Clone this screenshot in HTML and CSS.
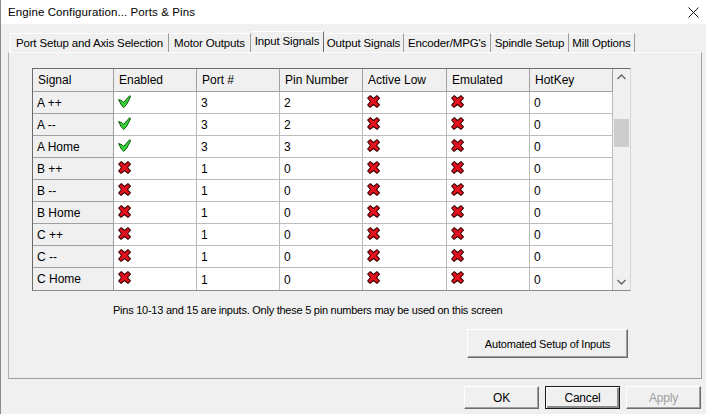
FILE: index.html
```html
<!DOCTYPE html>
<html>
<head>
<meta charset="utf-8">
<link rel="stylesheet" href="styles.css">
</head>
<body>
<svg class="defs" width="0" height="0">
  <symbol id="ok" viewBox="0 0 12 12">
    <path d="M0.5 4.2 L3.6 5.2 L5.2 6.8 L10.8 0.6 L11.6 1.6 L8 8.6 L5.4 11.5 L3.2 9.4 Z" fill="#33d633" stroke="#0b4f0b" stroke-width="0.9" stroke-linejoin="round"/>
  </symbol>
  <symbol id="no" viewBox="0 0 12 12">
    <path d="M0.6 2.8 L3 0.6 L6 3.2 L9.2 0.6 L11.5 2.8 L8.8 6 L11.5 9.2 L9.2 11.4 L6 8.8 L2.8 11.4 L0.6 9.2 L3.2 6 Z" fill="#e0101c" stroke="#3a0000" stroke-width="1" stroke-linejoin="round"/>
  </symbol>
</svg>

<div class="titlebar">
  <span class="title">Engine Configuration... Ports &amp; Pins</span>
  <svg class="close" width="11" height="11" viewBox="0 0 11 11"><path d="M0.5 0.5 L10.5 10.5 M10.5 0.5 L0.5 10.5" stroke="#111" stroke-width="1"/></svg>
</div>

<div class="tabs">
  <div class="tab t1">Port Setup and Axis Selection</div>
  <div class="tab t2">Motor Outputs</div>
  <div class="tab t3 active">Input Signals</div>
  <div class="tab t4">Output Signals</div>
  <div class="tab t5">Encoder/MPG's</div>
  <div class="tab t6">Spindle Setup</div>
  <div class="tab t7">Mill Options</div>
</div>

<div class="panel">
  <div class="gridwrap">
    <div class="grid">
      <div class="hd">Signal</div><div class="hd">Enabled</div><div class="hd">Port #</div><div class="hd">Pin Number</div><div class="hd">Active Low</div><div class="hd">Emulated</div><div class="hd">HotKey</div>

      <div class="rh">A ++</div><div class="c"><svg class="ic"><use href="#ok"/></svg></div><div class="c">3</div><div class="c">2</div><div class="c"><svg class="ic"><use href="#no"/></svg></div><div class="c"><svg class="ic"><use href="#no"/></svg></div><div class="c">0</div>

      <div class="rh">A --</div><div class="c"><svg class="ic"><use href="#ok"/></svg></div><div class="c">3</div><div class="c">2</div><div class="c"><svg class="ic"><use href="#no"/></svg></div><div class="c"><svg class="ic"><use href="#no"/></svg></div><div class="c">0</div>

      <div class="rh">A Home</div><div class="c"><svg class="ic"><use href="#ok"/></svg></div><div class="c">3</div><div class="c">3</div><div class="c"><svg class="ic"><use href="#no"/></svg></div><div class="c"><svg class="ic"><use href="#no"/></svg></div><div class="c">0</div>

      <div class="rh">B ++</div><div class="c"><svg class="ic"><use href="#no"/></svg></div><div class="c">1</div><div class="c">0</div><div class="c"><svg class="ic"><use href="#no"/></svg></div><div class="c"><svg class="ic"><use href="#no"/></svg></div><div class="c">0</div>

      <div class="rh">B --</div><div class="c"><svg class="ic"><use href="#no"/></svg></div><div class="c">1</div><div class="c">0</div><div class="c"><svg class="ic"><use href="#no"/></svg></div><div class="c"><svg class="ic"><use href="#no"/></svg></div><div class="c">0</div>

      <div class="rh">B Home</div><div class="c"><svg class="ic"><use href="#no"/></svg></div><div class="c">1</div><div class="c">0</div><div class="c"><svg class="ic"><use href="#no"/></svg></div><div class="c"><svg class="ic"><use href="#no"/></svg></div><div class="c">0</div>

      <div class="rh">C ++</div><div class="c"><svg class="ic"><use href="#no"/></svg></div><div class="c">1</div><div class="c">0</div><div class="c"><svg class="ic"><use href="#no"/></svg></div><div class="c"><svg class="ic"><use href="#no"/></svg></div><div class="c">0</div>

      <div class="rh">C --</div><div class="c"><svg class="ic"><use href="#no"/></svg></div><div class="c">1</div><div class="c">0</div><div class="c"><svg class="ic"><use href="#no"/></svg></div><div class="c"><svg class="ic"><use href="#no"/></svg></div><div class="c">0</div>

      <div class="rh last">C Home</div><div class="c last"><svg class="ic"><use href="#no"/></svg></div><div class="c last">1</div><div class="c last">0</div><div class="c last"><svg class="ic"><use href="#no"/></svg></div><div class="c last"><svg class="ic"><use href="#no"/></svg></div><div class="c last">0</div>
    </div>
    <div class="scrollbar">
      <svg class="arrow" width="17" height="17" viewBox="0 0 17 17"><path d="M4.5 10 L8.5 6 L12.5 10" fill="none" stroke="#606060" stroke-width="1.3"/></svg>
      <div class="track"><div class="thumb"></div></div>
      <svg class="arrow" width="17" height="17" viewBox="0 0 17 17"><path d="M4.5 7 L8.5 11 L12.5 7" fill="none" stroke="#606060" stroke-width="1.3"/></svg>
    </div>
  </div>

  <p class="caption">Pins 10-13 and 15 are inputs. Only these 5 pin numbers may be used on this screen</p>

  <div class="autorow">
    <button class="btn auto">Automated Setup of Inputs</button>
  </div>
</div>

<div class="footer">
  <button class="btn dlg">OK</button>
  <button class="btn dlg default">Cancel</button>
  <button class="btn dlg disabled">Apply</button>
</div>
</body>
</html>
```

FILE: styles.css
```css
* { box-sizing: border-box; }

html, body {
  margin: 0;
  padding: 0;
}

body {
  width: 706px;
  height: 414px;
  overflow: hidden;
  background: #f0f0f0;
  border-left: 1px solid #8a8a8a;
  font-family: "Liberation Sans", Arial, sans-serif;
  color: #000;
}

.defs { position: absolute; }

.titlebar {
  height: 24px;
  background: #fff;
  display: flex;
  align-items: center;
  justify-content: space-between;
  padding: 0 7px 0 7px;
}

.title {
  font-size: 11.5px;
  letter-spacing: 0.1px;
}

.tabs {
  display: flex;
  margin: 9px 0 0 9px;
  height: 19px;
}

.tab {
  height: 19px;
  font-size: 11.5px;
  line-height: 18px;
  text-align: center;
  border-top: 1px solid #fff;
  border-right: 1px solid #9a9a9a;
  white-space: nowrap;
  letter-spacing: -0.15px;
}

.t1 { width: 159px; border-left: 1px solid #fff; }
.t2 { width: 82px; }
.t3 { width: 73px; }
.t4 { width: 80px; }
.t5 { width: 87px; }
.t6 { width: 78px; }
.t7 { width: 66px; }

.tab.active {
  height: 21px;
  margin-top: -2px;
  line-height: 18px;
  border-right: 1px solid #6a6a6a;
}

.panel {
  width: 694px;
  height: 327px;
  margin-left: 7px;
  border: 1px solid #a0a0a0;
  border-top-color: #fafafa;
  border-left-color: #b0b0b0;
  padding: 15px 0 0 23px;
  display: flex;
  flex-direction: column;
}

.gridwrap {
  display: flex;
  width: 599px;
  border-top: 1px solid #6c6c6c;
  border-left: 1px solid #6c6c6c;
  border-bottom: 1px solid #8a8a8a;
  border-right: 1px solid #d6d6d6;
}

.grid {
  display: grid;
  grid-template-columns: 81px 83px 83px 83px 84px 83px 83px;
  grid-auto-rows: 22px;
  grid-template-rows: 23px;
  background: #fff;
  font-size: 12px;
}

.hd, .rh, .c {
  display: flex;
  align-items: center;
  padding-left: 4px;
  white-space: nowrap;
}

.hd {
  background: #f0f0f0;
  border-right: 1px solid #a0a0a0;
  border-bottom: 1px solid #a0a0a0;
  padding-left: 5px;
}

.rh {
  background: #f0f0f0;
  border-right: 1px solid #a0a0a0;
  border-bottom: 1px solid #a0a0a0;
}

.c {
  background: #fff;
  border-right: 1px solid #bcbcbc;
  border-bottom: 1px solid #bcbcbc;
  padding-top: 1px;
}

.rh.last, .c.last { border-bottom: none; }

.ic {
  width: 13px;
  height: 13px;
  align-self: flex-start;
  margin-top: 2px;
}

.scrollbar {
  width: 17px;
  background: #f0f0f0;
  display: flex;
  flex-direction: column;
}

.arrow { display: block; flex: none; }

.track {
  flex: 1;
  padding-top: 33px;
}

.thumb {
  width: 15px;
  height: 28px;
  margin-left: 1px;
  background: #cdcdcd;
}

.caption {
  margin: 12px 0 0 81px;
  font-size: 11px;
  letter-spacing: -0.25px;
  line-height: 14px;
}

.autorow {
  display: flex;
  justify-content: flex-end;
  margin: 12px 73px 0 0;
}

.btn {
  font-family: "Liberation Sans", Arial, sans-serif;
  font-size: 11px;
  letter-spacing: -0.2px;
  color: #000;
  background: #f0f0f0;
  border: 1px solid;
  border-color: #fff #6a6a6a #6a6a6a #fff;
  box-shadow: inset -1px -1px 0 #a0a0a0;
  padding: 0;
}

.auto {
  width: 161px;
  height: 29px;
}

.footer {
  display: flex;
  justify-content: flex-end;
  gap: 6px;
  margin: 7px 5px 0 0;
}

.dlg {
  width: 75px;
  height: 23px;
  font-size: 12px;
}

.dlg.default {
  border-color: #1a1a1a;
  box-shadow: inset 1px 1px 0 #fff, inset -2px -2px 0 #8a8a8a;
}

.dlg.disabled { color: #a0a0a0; }
```
